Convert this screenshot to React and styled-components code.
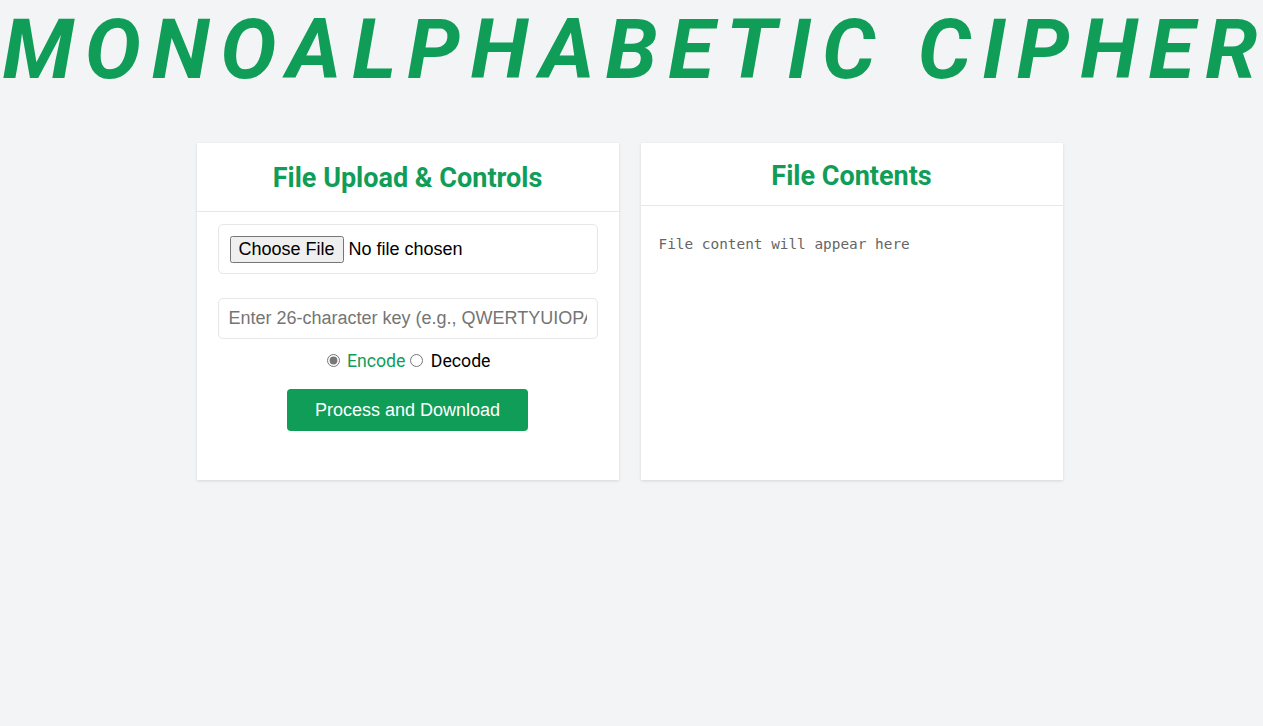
import React, { useState } from 'react';
import styled, { createGlobalStyle } from 'styled-components';

const GlobalStyle = createGlobalStyle`
  body {
    margin: 0;
    background: #f3f4f6;
    font-family: "Liberation Sans", Arial, sans-serif;
  }
`;

const Page = styled.div`
  min-height: 726px;
  background: #f3f4f6;
  overflow: hidden;
`;

const Title = styled.h1`
  margin: 0 -8px 0 0;
  padding-top: 2px;
  text-align: center;
  font-family: Roboto, sans-serif;
  font-weight: 700;
  font-style: italic;
  font-size: 84px;
  line-height: 96px;
  letter-spacing: 10.9px;
  color: #0f9d58;
  white-space: nowrap;
`;

const Columns = styled.div`
  display: flex;
  justify-content: center;
  gap: 22px;
  margin-top: 45px;
  padding-right: 4px;
`;

const Card = styled.section`
  width: 422px;
  height: 337px;
  background: #fff;
  box-shadow: 0 1px 3px rgba(0, 0, 0, 0.12);
  display: flex;
  flex-direction: column;
`;

const CardHeader = styled.div`
  height: ${(p) => p.$h}px;
  border-bottom: 1px solid #e5e7eb;
  display: flex;
  align-items: center;
  justify-content: center;
`;

const CardTitle = styled.h2`
  margin: 0;
  font-family: Roboto, sans-serif;
  font-weight: 700;
  font-size: 27px;
  color: #0f9d58;
  padding-top: ${(p) => p.$pt || 0}px;
`;

const Controls = styled.div`
  padding: 12px 21px;
  display: flex;
  flex-direction: column;
  align-items: center;
`;

const FileBox = styled.div`
  width: 100%;
  box-sizing: border-box;
  height: 50px;
  border: 1px solid #e5e7eb;
  border-radius: 5px;
  display: flex;
  align-items: center;
  padding-left: 11px;
`;

const FileInput = styled.input`
  font-family: "Liberation Sans", Arial, sans-serif;
  font-size: 18px;
  color: #000;
  &::file-selector-button {
    padding: 1px 7px;
    margin-right: 5px;
  }
`;

const KeyInput = styled.input`
  width: 100%;
  box-sizing: border-box;
  height: 41px;
  margin-top: 24px;
  border: 1px solid #e5e7eb;
  border-radius: 5px;
  padding: 0 10px;
  font-family: "Liberation Sans", Arial, sans-serif;
  font-size: 18px;
  outline: none;
  &::placeholder {
    color: #757575;
  }
`;

const RadioRow = styled.div`
  margin-top: 10px;
  margin-right: 3px;
  font-family: Roboto, sans-serif;
  font-size: 17.7px;
  line-height: 24px;
`;

const RadioLabel = styled.label`
  color: ${(p) => (p.$active ? '#0f9d58' : '#000')};
  input {
    accent-color: #777;
  }
`;

const Button = styled.button`
  margin-top: 16px;
  width: 241px;
  height: 42px;
  border: none;
  border-radius: 4px;
  background: #0f9d58;
  color: #fff;
  font-family: "Liberation Sans", Arial, sans-serif;
  font-size: 18px;
  cursor: pointer;
`;

const Content = styled.pre`
  margin: 0;
  padding: 30px 18px;
  font-family: "DejaVu Sans Mono", "Liberation Mono", monospace;
  font-size: 14.4px;
  color: #666;
`;

export default function App() {
  const [mode, setMode] = useState('encode');
  return (
    <Page>
      <GlobalStyle />
      <Title>MONOALPHABETIC CIPHER</Title>
      <Columns>
        <Card>
          <CardHeader $h={68}>
            <CardTitle $pt={2}>File Upload &amp; Controls</CardTitle>
          </CardHeader>
          <Controls>
            <FileBox>
              <FileInput type="file" />
            </FileBox>
            <KeyInput type="text" placeholder="Enter 26-character key (e.g., QWERTYUIOPASDFGHJKLZXCVBNM)" />
            <RadioRow>
              <RadioLabel $active={mode === 'encode'}>
                <input type="radio" name="mode" checked={mode === 'encode'} onChange={() => setMode('encode')} /> Encode
              </RadioLabel>
              <RadioLabel $active={mode === 'decode'}>
                <input type="radio" name="mode" checked={mode === 'decode'} onChange={() => setMode('decode')} /> Decode
              </RadioLabel>
            </RadioRow>
            <Button>Process and Download</Button>
          </Controls>
        </Card>
        <Card>
          <CardHeader $h={62}>
            <CardTitle $pt={3}>File Contents</CardTitle>
          </CardHeader>
          <Content>File content will appear here</Content>
        </Card>
      </Columns>
    </Page>
  );
}
